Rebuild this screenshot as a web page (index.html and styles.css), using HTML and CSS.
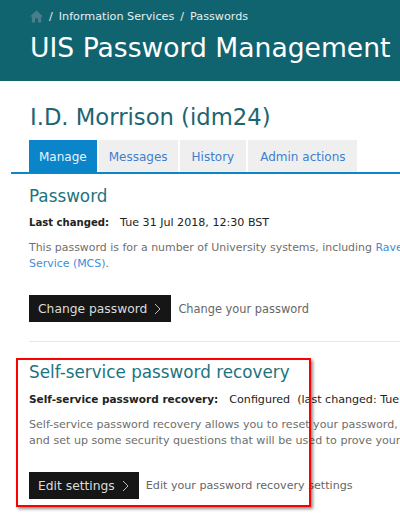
FILE: index.html
```html
<!DOCTYPE html>
<html>
  <head>
    <meta charset="UTF-8">
    <title>UIS Password Management</title>
    <link rel="stylesheet" href="styles.css">
  </head>
  <body>
    <header class="banner">
      <div class="crumbs">
        <svg class="home" width="13" height="13" viewBox="0 0 14 13"><path d="M7 0 L14 6.5 L12 6.5 L12 13 L8.5 13 L8.5 8.5 L5.5 8.5 L5.5 13 L2 13 L2 6.5 L0 6.5 Z"/></svg>
        <span class="sep">/</span><span>Information Services</span><span class="sep">/</span><span>Passwords</span>
      </div>
      <h1>UIS Password Management</h1>
    </header>

    <main class="content">
      <h2 class="user">I.D. Morrison (idm24)</h2>

      <div class="tabs">
        <a class="tab active" href="#">Manage</a>
        <a class="tab" href="#">Messages</a>
        <a class="tab wide" href="#">History</a>
        <a class="tab wide" href="#">Admin actions</a>
      </div>

      <section class="panel first">
        <h3>Password</h3>
        <p class="status"><b>Last changed:</b>Tue 31 Jul 2018, 12:30 BST</p>
        <p class="info">This password is for a number of University systems, including <a href="#">Raven</a><br><a href="#">Service (MCS)</a>.</p>
        <div class="action">
          <a class="btn" href="#">Change password
            <svg width="7" height="12" viewBox="0 0 7 12"><path d="M1 1 L6 6 L1 11"/></svg>
          </a>
          <span>Change your password</span>
        </div>
      </section>

      <section class="panel second">
        <h3>Self-service password recovery</h3>
        <p class="status"><b>Self-service password recovery:</b>Configured&nbsp; (last changed: Tue</p>
        <p class="info">Self-service password recovery allows you to reset your password,<br>and set up some security questions that will be used to prove your</p>
        <div class="action">
          <a class="btn" href="#">Edit settings
            <svg width="7" height="12" viewBox="0 0 7 12"><path d="M1 1 L6 6 L1 11"/></svg>
          </a>
          <span>Edit your password recovery settings</span>
        </div>
      </section>
    </main>

    <div class="highlight"></div>
  </body>
</html>
```

FILE: styles.css
```css
html, body {
  margin: 0;
  height: 516px;
  overflow: hidden;
}

body {
  position: relative;
  font-family: "DejaVu Sans", Verdana, sans-serif;
  background: #fff;
  white-space: nowrap;
}

/* Top banner */
.banner {
  background-color: #106470;
  height: 81px;
  padding-left: 30px;
  box-sizing: border-box;
  overflow: hidden;
}

.crumbs {
  display: flex;
  align-items: center;
  padding-top: 10px;
  height: 13px;
  font-size: 11.2px;
  color: #e4eef0;
}

.crumbs .home {
  fill: #47808b;
}

.sep {
  margin: 0 6px;
}

.banner h1 {
  margin: 7px 0 0;
  font-size: 26.6px;
  line-height: 36px;
  font-weight: normal;
  color: #fff;
}

/* Main column */
.content {
  padding-left: 11px;
}

.user {
  margin: 20px 0 0 19px;
  font-size: 22.7px;
  line-height: 32px;
  font-weight: normal;
  color: #1b6672;
}

.tabs {
  display: flex;
  gap: 2px;
  margin-top: 7px;
  padding-left: 18px;
  border-bottom: 2px solid #0d85c9;
}

.tab {
  padding: 0 10px;
  height: 32px;
  line-height: 34px;
  font-size: 12px;
  background: #f0efef;
  color: #3d7fd0;
  text-decoration: none;
}

.tab.wide {
  padding: 0 12px;
}

.tab.active {
  background: #0a85c9;
  color: #e8f4fb;
}

/* Sections */
.panel {
  margin-left: 18px;
  padding-top: 18px;
  box-sizing: border-box;
  color: #333;
}

.panel.first {
  height: 168px;
  padding-top: 10px;
  border-bottom: 1px solid #e6e6e6;
}

.panel h3 {
  margin: 0;
  font-size: 16.8px;
  line-height: 24px;
  font-weight: normal;
  color: #1c7380;
}

.status {
  margin: 7px 0 0;
  font-size: 11.1px;
  line-height: 16px;
  color: #222;
}

.status b {
  margin-right: 11px;
  font-size: 10.5px;
}

.first .status b {
  font-size: 10.1px;
}

.info {
  margin: 9px 0 0;
  font-size: 11.1px;
  line-height: 16px;
  color: #6e6e6e;
}

.first .info {
  font-size: 10.95px;
}

.info a {
  color: #3d8ed8;
  text-decoration: none;
}

.action {
  display: flex;
  align-items: center;
  margin-top: 23px;
  font-size: 11.4px;
  color: #666;
}

.second .action {
  font-size: 11.15px;
}

.btn {
  display: flex;
  align-items: center;
  gap: 7px;
  height: 27px;
  padding: 0 10px 0 9px;
  margin-right: 7px;
  background: #161616;
  color: #dcdcdc;
  font-size: 12.3px;
  text-decoration: none;
}

.btn svg {
  fill: none;
  stroke: #bbb;
  stroke-width: 1;
}

/* Red annotation box drawn over the page */
.highlight {
  position: absolute;
  left: 16px;
  top: 358px;
  width: 291px;
  height: 145px;
  border: 2px solid #f00;
  box-shadow: 2px 2px 3px rgba(0, 0, 0, 0.45);
}
```
